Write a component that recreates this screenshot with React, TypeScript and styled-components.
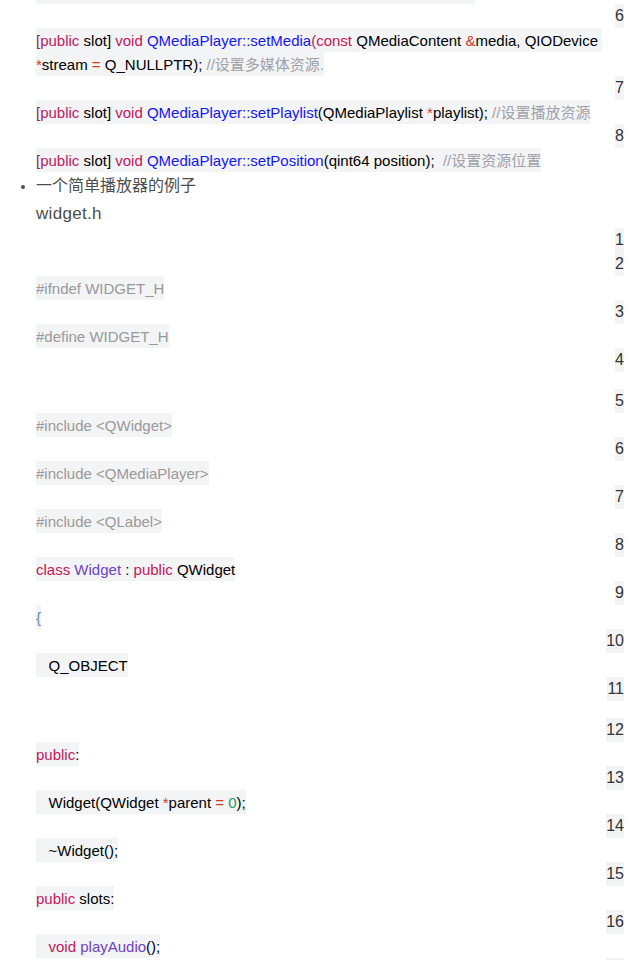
import React from "react";
import styled, { createGlobalStyle } from "styled-components";

const Global = createGlobalStyle`
  html, body { margin: 0; padding: 0; background: #ffffff; overflow: hidden; }
  body { font-family: "Liberation Sans", "Noto Sans CJK SC", sans-serif; }
`;

const Viewport = styled.div`
  width: 634px;
  height: 960px;
  overflow: hidden;
`;

const Article = styled.div`
  margin-top: -20px;
  display: flex;
  flex-direction: column;
`;

const NumRow = styled.div`
  height: 24px;
  display: flex;
  justify-content: flex-end;
  padding-right: 10px;
`;

const Num = styled.span`
  display: block;
  height: 24px;
  line-height: 24px;
  font-size: 16px;
  color: #333;
  background: #f2f3f5;
  font-family: "Liberation Sans", sans-serif;
`;

const CodeRow = styled.div`
  padding: 0 10px 0 36px;
  font-size: 15px;
  line-height: 24px;
  min-height: 24px;
  font-family: "Liberation Sans", "Noto Sans CJK SC", sans-serif;
  color: #000;
`;

const EmptyRow = styled.div`
  height: 17px;
`;

const Code = styled.span`
  background: #f3f4f5;
  padding: 3.5px 0;
  white-space: pre-wrap;
`;

type Tone = "kw" | "fn" | "title" | "cm" | "meta" | "op" | "num" | "br" | "pl" | "brace";
const toneColor: Record<Tone, string> = {
  kw: "#c2185b",
  fn: "#1515f5",
  title: "#6f42c1",
  cm: "#a0a1a7",
  meta: "#999999",
  op: "#d23a2a",
  num: "#1c9a6f",
  br: "#8e2d4e",
  pl: "#000000",
  brace: "#5b8cb3",
};

const T = styled.span<{ $t: Tone }>`
  color: ${(p) => toneColor[p.$t]};
`;

const List = styled.ul`
  margin: 0;
  padding: 0 0 0 36px;
  color: #4d4d4d;
  font-size: 16px;
  line-height: 28px;
  font-family: "Liberation Sans", "Noto Sans CJK SC", sans-serif;
`;

const Item = styled.li`
  list-style: disc;
  &::marker { font-size: 13px; color: #4d4d4d; }
`;

const Para = styled.div`
  font-size: 17px;
  letter-spacing: 0.3px;
`;

type Seg = [Tone, string];
type Row = { n: string } | { c: Seg[] } | { e: true } | { list: true };

const slot = (rest: Seg[]): Seg[] => [
  ["br", "["],
  ["kw", "public"],
  ["pl", " slot] "],
  ["kw", "void"],
  ["pl", " "],
  ...rest,
];

const rows: Row[] = [
  { c: slot([["fn", "QMediaPlayer::setVolume"], ["pl", "(int volume); "], ["cm", "//设置音量"]]) },
  { n: "6" },
  {
    c: slot([
      ["fn", "QMediaPlayer::setMedia"],
      ["kw", "(const"],
      ["pl", " QMediaContent "],
      ["op", "&"],
      ["pl", "media, QIODevice "],
      ["op", "*"],
      ["pl", "stream "],
      ["op", "="],
      ["pl", " Q_NULLPTR); "],
      ["cm", "//设置多媒体资源."],
    ]),
  },
  { n: "7" },
  {
    c: slot([
      ["fn", "QMediaPlayer::setPlaylist"],
      ["pl", "(QMediaPlaylist "],
      ["op", "*"],
      ["pl", "playlist); "],
      ["cm", "//设置播放资源"],
    ]),
  },
  { n: "8" },
  {
    c: slot([
      ["fn", "QMediaPlayer::setPosition"],
      ["pl", "(qint64 position);  "],
      ["cm", "//设置资源位置"],
    ]),
  },
  { list: true },
  { n: "1" },
  { n: "2" },
  { c: [["meta", "#ifndef WIDGET_H"]] },
  { n: "3" },
  { c: [["meta", "#define WIDGET_H"]] },
  { n: "4" },
  { e: true },
  { n: "5" },
  { c: [["meta", "#include <QWidget>"]] },
  { n: "6" },
  { c: [["meta", "#include <QMediaPlayer>"]] },
  { n: "7" },
  { c: [["meta", "#include <QLabel>"]] },
  { n: "8" },
  { c: [["kw", "class"], ["pl", " "], ["title", "Widget"], ["pl", " : "], ["kw", "public"], ["pl", " QWidget"]] },
  { n: "9" },
  { c: [["brace", "{"]] },
  { n: "10" },
  { c: [["pl", "   Q_OBJECT"]] },
  { n: "11" },
  { e: true },
  { n: "12" },
  { c: [["kw", "public"], ["pl", ":"]] },
  { n: "13" },
  {
    c: [
      ["pl", "   Widget(QWidget "],
      ["op", "*"],
      ["pl", "parent "],
      ["op", "="],
      ["pl", " "],
      ["num", "0"],
      ["pl", ");"],
    ],
  },
  { n: "14" },
  { c: [["pl", "   ~Widget();"]] },
  { n: "15" },
  { c: [["kw", "public"], ["pl", " slots:"]] },
  { n: "16" },
  { c: [["pl", "   "], ["kw", "void"], ["pl", " "], ["title", "playAudio"], ["pl", "();"]] },
  { n: "17" },
];

export default function App() {
  return (
    <Viewport>
      <Global />
      <Article>
        {rows.map((r, i) => {
          if ("n" in r)
            return (
              <NumRow key={i}>
                <Num>{r.n}</Num>
              </NumRow>
            );
          if ("e" in r) return <EmptyRow key={i} />;
          if ("list" in r)
            return (
              <List key={i}>
                <Item>
                  一个简单播放器的例子
                  <Para>widget.h</Para>
                </Item>
              </List>
            );
          return (
            <CodeRow key={i}>
              <Code>
                {r.c.map(([t, s], j) => (
                  <T key={j} $t={t}>
                    {s}
                  </T>
                ))}
              </Code>
            </CodeRow>
          );
        })}
      </Article>
    </Viewport>
  );
}
